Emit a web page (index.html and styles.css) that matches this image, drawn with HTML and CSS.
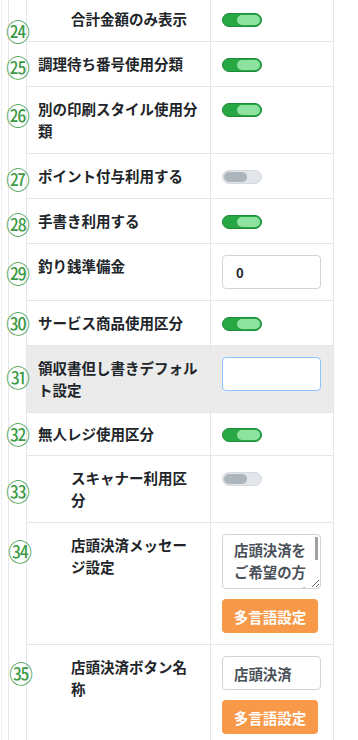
FILE: index.html
```
<!DOCTYPE html>
<html lang="ja">
<head>
    <meta charset="UTF-8">
    <meta name="viewport" content="width=device-width, initial-scale=1.0">
    <title>店舗設定</title>
    <link rel="stylesheet" href="styles.css">
</head>
<body>
    <div class="page">
        <div class="panel">
            <div class="settings">
                <div class="row">
                    <div class="label indent">合計金額のみ表示</div>
                    <div class="value"><span class="switch on"></span></div>
                    <span class="mark m24">㉔</span>
                </div>
                <div class="row">
                    <div class="label">調理待ち番号使用分類</div>
                    <div class="value"><span class="switch on"></span></div>
                    <span class="mark m25">㉕</span>
                </div>
                <div class="row">
                    <div class="label">別の印刷スタイル使用分類</div>
                    <div class="value"><span class="switch on"></span></div>
                    <span class="mark m26">㉖</span>
                </div>
                <div class="row">
                    <div class="label">ポイント付与利用する</div>
                    <div class="value"><span class="switch"></span></div>
                    <span class="mark m27">㉗</span>
                </div>
                <div class="row">
                    <div class="label">手書き利用する</div>
                    <div class="value"><span class="switch on"></span></div>
                    <span class="mark m28">㉘</span>
                </div>
                <div class="row">
                    <div class="label">釣り銭準備金</div>
                    <div class="value"><input class="field field-strong" type="text" value="0"></div>
                    <span class="mark m29">㉙</span>
                </div>
                <div class="row">
                    <div class="label">サービス商品使用区分</div>
                    <div class="value"><span class="switch on"></span></div>
                    <span class="mark m30">㉚</span>
                </div>
                <div class="row row-hover">
                    <div class="label">領収書但し書きデフォルト設定</div>
                    <div class="value"><input class="field field-focus" type="text" value=""></div>
                    <span class="mark m31">㉛</span>
                </div>
                <div class="row row-tight">
                    <div class="label">無人レジ使用区分</div>
                    <div class="value"><span class="switch on"></span></div>
                    <span class="mark m32">㉜</span>
                </div>
                <div class="row">
                    <div class="label indent">スキャナー利用区分</div>
                    <div class="value"><span class="switch"></span></div>
                    <span class="mark m33">㉝</span>
                </div>
                <div class="row">
                    <div class="label indent">店頭決済メッセージ設定</div>
                    <div class="value stack">
                        <span class="memo-wrap">
                            <textarea class="field memo">店頭決済をご希望の方は以下のボタンを押してください。</textarea>
                        </span>
                        <button class="lang-btn" type="button">多言語設定</button>
                    </div>
                    <span class="mark m34">㉞</span>
                </div>
                <div class="row">
                    <div class="label indent">店頭決済ボタン名称</div>
                    <div class="value stack">
                        <input class="field" type="text" value="店頭決済">
                        <button class="lang-btn" type="button">多言語設定</button>
                    </div>
                    <span class="mark m35">㉟</span>
                </div>
            </div>
        </div>
    </div>
</body>
</html>
```

FILE: styles.css
```
body {
    margin: 0;
    font-family: 'Noto Sans CJK JP', 'Noto Sans', sans-serif;
    background-color: #ffffff;
    color: #212529;
    overflow: hidden;
}

.page {
    border-left: 1px solid #eeeeee;
    margin-left: 1px;
    padding-left: 6px;
}

.panel {
    width: 326px;
    border-left: 1px solid #e3e6ea;
    border-right: 1px solid #e3e6ea;
    padding: 0 18px 0 17px;
}

.settings {
    width: 306px;
    margin-top: -3px;
    border-left: 1px solid #e3e6ea;
    border-right: 1px solid #e3e6ea;
}

.row {
    position: relative;
    display: grid;
    grid-template-columns: 184px 1fr;
    border-bottom: 1px solid #e3e6ea;
}

.row-hover {
    background-color: #ebebeb;
}

.label {
    padding: 11px 11px;
    border-right: 1px solid #e3e6ea;
    font-size: 14.5px;
    font-weight: bold;
    line-height: 22px;
}

.label.indent {
    padding-left: 44px;
}

.row-tight .label {
    padding-top: 10px;
    padding-bottom: 10px;
}

.value {
    padding: 11px 11px;
}

.row-tight .value {
    padding-top: 10px;
}

.stack {
    display: flex;
    flex-direction: column;
    align-items: flex-start;
    gap: 10px;
}

/* switches */
.switch {
    position: relative;
    display: block;
    width: 40px;
    height: 14px;
    margin-top: 5px;
    box-sizing: border-box;
    border-radius: 7px;
    background-color: #e2e5e9;
    border: 1px solid #d6d9dd;
}

.switch::after {
    content: '';
    position: absolute;
    top: 1px;
    left: 1px;
    width: 23px;
    height: 10px;
    border-radius: 5px;
    background-color: #adb5bd;
}

.switch.on {
    background-color: #28a745;
    border-color: #1f8a39;
}

.switch.on::after {
    left: 14px;
    background-color: #8de2a0;
}

/* inputs */
.field {
    display: block;
    width: 99px;
    height: 34px;
    box-sizing: border-box;
    padding: 0 11px;
    border: 1px solid #ced4da;
    border-radius: 4px;
    background-color: #ffffff;
    font-family: inherit;
    font-size: 14.4px;
    font-weight: bold;
    color: #495057;
    outline: none;
}

.field-strong {
    padding-left: 13px;
    color: #212529;
    font-size: 13px;
}

.field-focus {
    border-color: #8cc4ff;
}

.memo-wrap {
    position: relative;
    display: block;
}

/* scroll thumb of the message box */
.memo-wrap::after {
    content: '';
    position: absolute;
    top: 3px;
    right: 3px;
    width: 3px;
    height: 23px;
    background-color: #a0a0a0;
}

.memo {
    height: 55px;
    padding: 4px 6px 0 11px;
    line-height: 22px;
    resize: vertical;
    overflow: hidden;
}

.lang-btn {
    width: 96px;
    height: 34px;
    border: none;
    border-radius: 4px;
    background-color: #f8994a;
    color: #ffffff;
    font-family: inherit;
    font-size: 14.5px;
    font-weight: bold;
    padding: 0;
}

/* green number annotations */
.mark {
    position: absolute;
    left: -21px;
    width: 24px;
    text-align: center;
    font-size: 24px;
    line-height: 24px;
    color: #3b9a45;
    transform: translateY(-50%);
}

.m24 { top: 34px; }
.m25 { top: 25px; }
.m26 { top: 28px; }
.m27 { top: 25px; }
.m28 { top: 25px; }
.m29 { top: 29px; }
.m30 { top: 22px; }
.m31 { top: 31px; }
.m32 { top: 21px; }
.m33 { top: 35px; }
.m34 { top: 28px; left: -19px; }
.m35 { top: 28px; left: -18px; }
```
